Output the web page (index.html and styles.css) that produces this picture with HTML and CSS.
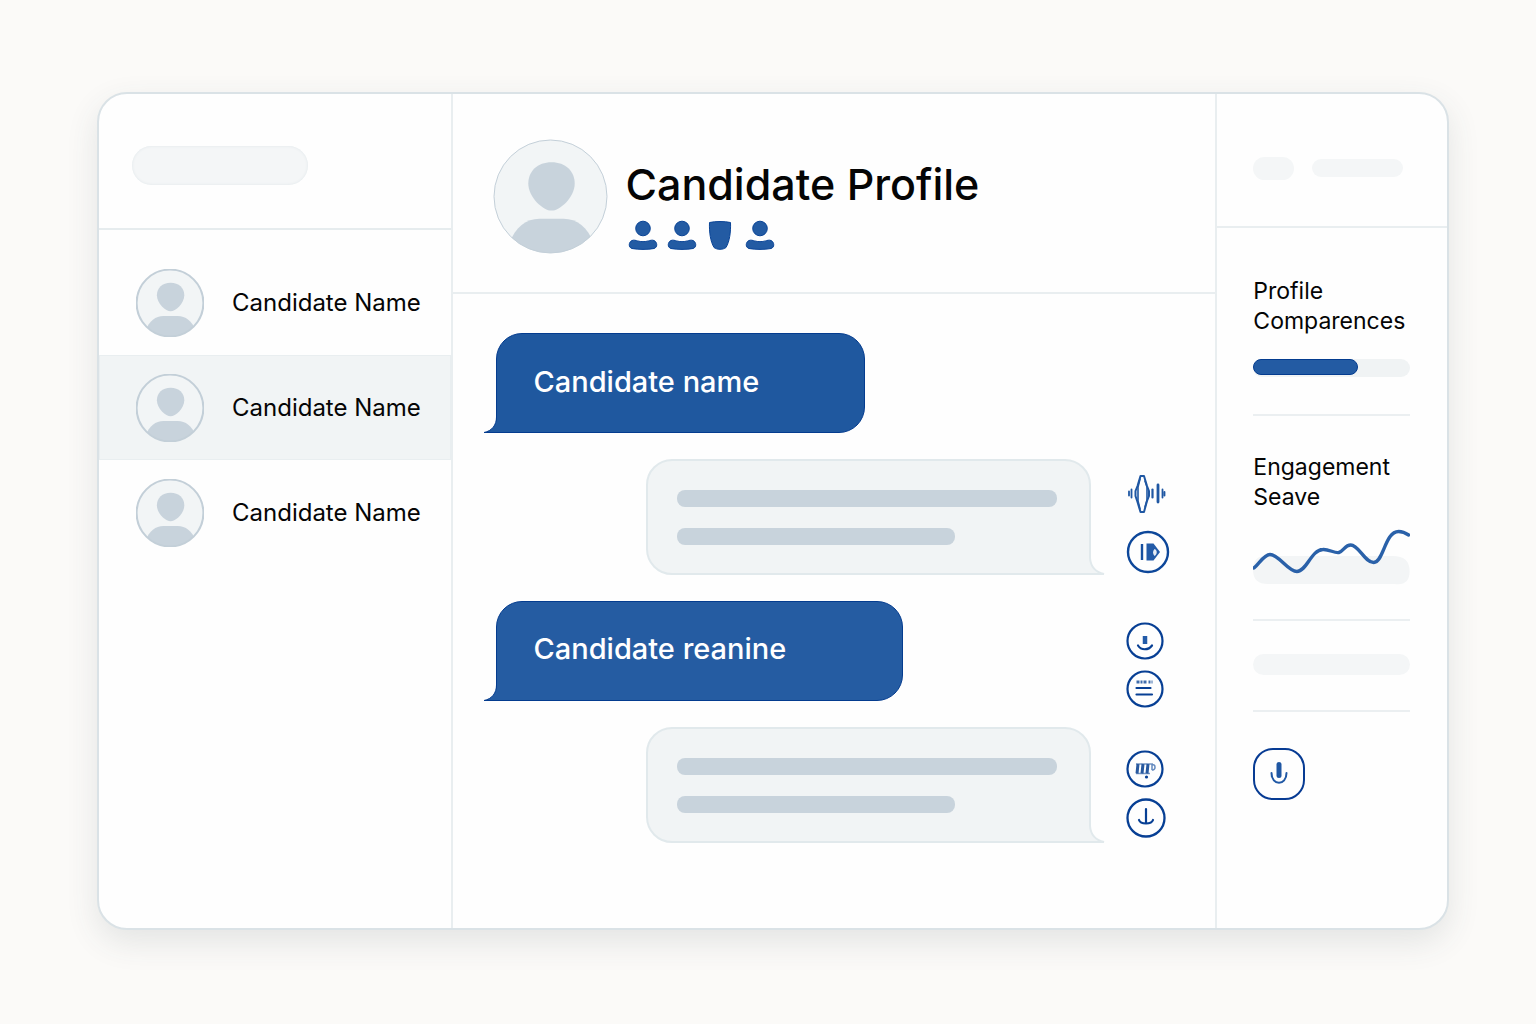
FILE: index.html
```html
<!DOCTYPE html>
<html lang="en">
<head>
<meta charset="utf-8">
<meta name="viewport" content="width=device-width, initial-scale=1">
<title>Candidate Profile</title>
<link rel="stylesheet" href="styles.css">
</head>
<body>
<svg class="defs" aria-hidden="true">
  <symbol id="avatar" viewBox="0 0 114 114">
    <clipPath id="avatar-clip"><circle cx="57" cy="57" r="56"/></clipPath>
    <circle cx="57" cy="57" r="56" fill="#f2f5f6" stroke="none"/>
    <g clip-path="url(#avatar-clip)" fill="#c8d3dc" stroke="none">
      <path d="M58 23C44 23 35 32 35 44C35 58 50 71 58 71S81 58 81 44C81 32 72 23 58 23Z"/>
      <path d="M16 104C22 87 33 79 46 79h24c13 0 24 8 30 25v12H16Z"/>
    </g>
    <circle cx="57" cy="57" r="56" fill="none" vector-effect="non-scaling-stroke"/>
  </symbol>
  <symbol id="person" viewBox="0 0 30 30">
    <g fill="#235ba3" stroke="#0a4496">
      <circle cx="15" cy="8.500" r="7.300"/>
      <path d="M4 20.500c2-.8 4 0 5.500.4 3.500 1 7.500 1 11 0 1.500-.4 3.500-1.200 5.500-.4 3.500 1.500 3.800 7 0 8-6 1.200-16 1.200-22 0-3.800-1-3.500-6.500 0-8Z"/>
    </g>
  </symbol>
</svg>

<div class="card">
  <aside class="sidebar">
    <header class="sidebar-head"><span class="ghost search-ghost"></span></header>
    <nav class="people" aria-label="Candidates">
      <a class="person" href="#one"><svg class="avatar"><use href="#avatar"/></svg>Candidate Name</a>
      <a class="person selected" href="#two" aria-current="page"><svg class="avatar"><use href="#avatar"/></svg>Candidate Name</a>
      <a class="person" href="#three"><svg class="avatar"><use href="#avatar"/></svg>Candidate Name</a>
    </nav>
  </aside>

  <main class="main">
    <header class="profile">
      <svg class="avatar large"><use href="#avatar"/></svg>
      <div class="profile-text">
        <h1>Candidate Profile</h1>
        <div class="badges">
          <svg><use href="#person"/></svg>
          <svg><use href="#person"/></svg>
          <svg viewBox="0 0 30 30"><path d="M3.500 2.500c6-1.300 15-1.300 21 0 .4 10-1 19-4.500 25-3 2.400-9 2.400-12 0-3.500-6-4.900-15-4.500-25Z" fill="#235ba3" stroke="#0a4496"/></svg>
          <svg><use href="#person"/></svg>
        </div>
      </div>
    </header>

    <section class="conversation">
      <div class="thread">
        <div class="bubble sent first">Candidate name
          <svg class="tail" viewBox="0 0 20 20"><path d="M12.500 0V4C12.500 12 8 18 0 19.500H20V0Z" fill="#1f589f"/><path d="M12.500 0V4C12.500 12 8 18 0 19.500H20" fill="none" stroke="#043c8f"/></svg>
        </div>
        <div class="bubble received"><span class="line"></span><span class="line short"></span>
          <svg class="tail" viewBox="0 0 20 20"><path d="M5 0V3Q6 16 19 19H0V0Z" fill="#f1f4f5"/><path d="M5 0V3Q6 16 19 19H0" fill="none" stroke="#e1e9ec" stroke-width="2"/></svg>
        </div>
        <div class="bubble sent second">Candidate reanine
          <svg class="tail" viewBox="0 0 20 20"><path d="M12.500 0V4C12.500 12 8 18 0 19.500H20V0Z" fill="#255ca2"/><path d="M12.500 0V4C12.500 12 8 18 0 19.500H20" fill="none" stroke="#043c8f"/></svg>
        </div>
        <div class="bubble received"><span class="line"></span><span class="line short"></span>
          <svg class="tail" viewBox="0 0 20 20"><path d="M5 0V3Q6 16 19 19H0V0Z" fill="#f1f4f5"/><path d="M5 0V3Q6 16 19 19H0" fill="none" stroke="#e1e9ec" stroke-width="2"/></svg>
        </div>
      </div>

      <div class="actions">
        <div class="action-group wide">
          <button class="action wave" aria-label="Audio waveform">
            <svg viewBox="0 0 40 40" fill="none" stroke="#1f57a3" stroke-linecap="round" stroke-linejoin="round"><path d="M3 17.500v4M5.500 15.500v8" stroke-width="1.800"/><path d="M14.500 2h3.500l3 10 2 5v5l-2 5-3 11h-3.500l-3-10-2-6v-5l2-5Z" stroke-width="2"/><path d="M14 5 12 13v14l2 8M19 7l2 6v13l-2 7" stroke-width="1.600"/><path d="M26.500 15.500v8" stroke-width="2.200"/><path d="M32 11v17" stroke-width="2.800"/><path d="M36.500 15.500v8M38.500 18v3.500" stroke-width="1.800"/></svg>
          </button>
          <button class="action big" aria-label="Play">
            <svg viewBox="0 0 44 44"><circle cx="22" cy="22" r="20" fill="none" stroke="#0d479a" stroke-width="2.400"/><path d="M16 14v16" stroke="#164f9f" stroke-width="2.400"/><path d="M20.500 13.500h7l6.500 8.500-6.500 8.500h-7Z" fill="#235ba8"/><path d="M28.500 19c3 1 3 5 0 7-2-2-2-5 0-7Z" fill="#e7edf5"/></svg>
          </button>
        </div>
        <div class="action-group">
          <button class="action" aria-label="Record">
            <svg viewBox="0 0 38 38" fill="none" stroke="#073f94" stroke-linecap="round"><circle cx="19" cy="19" r="17.500" stroke-width="2.200"/><path d="M19 14v8" stroke="#235ba8" stroke-width="4.500" stroke-linecap="butt"/><path d="M12 23.500c3 5 10.500 5 14 0" stroke-width="2.200"/></svg>
          </button>
          <button class="action" aria-label="Transcript">
            <svg viewBox="0 0 38 38" fill="none" stroke="#073f94" stroke-linecap="round"><circle cx="19" cy="19" r="17.500" stroke-width="2.200"/><path d="M10.500 18h14M10.500 24.500h15.500" stroke-width="2.200"/><path d="M10.500 12h16" stroke="#3f6cac" stroke-width="3" stroke-linecap="butt" stroke-dasharray="3 1 2 1 3 2 2 1"/></svg>
          </button>
        </div>
        <div class="action-group">
          <button class="action" aria-label="Notes">
            <svg viewBox="0 0 38 38" fill="none" stroke="#073f94"><circle cx="19" cy="19" r="17.500" stroke-width="2.200"/><path d="M10 14h17M10 23.500h14" stroke="#7898c5" stroke-width="1.400"/><path d="m12 14-1 9.500M17 14l-1 9.500M22 14l-1 9.500" stroke="#28599f" stroke-width="3"/><path d="M26 14v6M26 15c4-2 4 6 0 5" stroke="#6389be" stroke-width="1.500"/><circle cx="20.500" cy="27" r="1.600" fill="#073f94" stroke="none"/></svg>
          </button>
          <button class="action mid" aria-label="Download">
            <svg viewBox="0 0 40 40" fill="none" stroke="#073f94" stroke-linecap="round"><circle cx="20" cy="20" r="18.500" stroke-width="2.300"/><path d="M20 11v14M13 22c1 3 4 3.500 7 3.500s6-.5 7-3.500" stroke-width="2.200"/></svg>
          </button>
        </div>
      </div>
    </section>
  </main>

  <aside class="insights">
    <header class="insights-head"><span class="ghost dot-ghost"></span><span class="ghost bar-ghost"></span></header>
    <div class="insights-body">
      <section class="panel compare">
        <h2>Profile Comparences</h2>
        <div class="meter" role="img" aria-label="Profile comparison"><span></span></div>
      </section>
      <section class="panel engagement">
        <h2>Engagement Seave</h2>
        <svg class="chart" viewBox="0 0 157 56" preserveAspectRatio="none"><path d="M12 27H140Q157 27 157 42T142 55H15Q0 55 0 41T12 27Z" fill="#f3f5f6"/><path d="M1 39C6 35 11 25.500 17 25.500 26 25.500 35 42.500 44 42.500 54 42.500 58 21 70 20.500 76 20 82 24.500 86 23.500 91 22 92 16 98 16 106 16 112 33.500 121 33.500 131 33.500 132 2.500 146 2.500 150 2.500 153 4 156 6" fill="none" stroke="#2a61a9" stroke-width="3.400" stroke-linecap="round"/></svg>
      </section>
      <section class="panel note"><span class="ghost note-ghost"></span></section>
      <button class="mic" aria-label="Microphone">
        <svg viewBox="0 0 24 24" fill="none" stroke-linecap="round"><path d="M12 2.500v11" stroke="#1f57a3" stroke-width="5"/><path d="M4.500 11c0 13 15 13 15 0" stroke="#2058a5" stroke-width="2"/></svg>
      </button>
    </div>
  </aside>
</div>
</body>
</html>
```
FILE: styles.css
```css
* { box-sizing: border-box; }

body {
  margin: 0;
  min-height: 100vh;
  display: flex;
  padding: 92px 87px 94px 97px;
  background: #fbfaf8;
  color: #050505;
  font-family: Inter, "Liberation Sans", sans-serif;
}

h1, h2 { margin: 0; font-weight: 400; }
a { color: inherit; text-decoration: none; }
svg { display: block; }
.defs { position: absolute; width: 0; height: 0; }

button {
  padding: 0;
  border: 0;
  background: none;
  cursor: pointer;
}

.card {
  flex: 1;
  display: grid;
  grid-template-columns: minmax(0, 355fr) minmax(0, 763fr) minmax(0, 232fr);
  border: 2px solid #dae2e6;
  border-radius: 30px;
  background: #fefefe;
  box-shadow: 0 12px 32px rgba(60, 70, 80, 0.12);
  overflow: hidden;
}

.ghost {
  display: block;
  background: #f4f6f7;
  border-radius: 20px;
}

.avatar {
  flex: none;
  width: 68px;
  height: 68px;
  stroke: #c3cfd8;
  stroke-width: 2px;
}

/* Candidate list */
.sidebar { border-right: 2px solid #e9eef0; }
.sidebar-head {
  height: 136px;
  padding: 52px 33px 0;
  border-bottom: 2px solid #e6ecee;
}
.search-ghost {
  width: 176px;
  height: 39px;
  box-shadow: inset 0 0 3px #dfe6e9;
}
.people { padding-top: 20px; }
.person {
  display: flex;
  align-items: center;
  gap: 28px;
  height: 105px;
  padding-left: 37px;
  font-size: 24px;
  white-space: nowrap;
}
.selected {
  background: #f1f4f5;
  box-shadow: inset 0 0 0 1px #e9eef0;
}

/* Profile header */
.profile {
  display: flex;
  align-items: flex-start;
  gap: 17px;
  height: 200px;
  padding: 45px 40px 0;
  border-bottom: 2px solid #e9eef0;
}
.large { width: 115px; height: 115px; stroke-width: 1px; }
.profile-text { padding-top: 17px; }
h1 {
  font-size: 43px;
  line-height: 56px;
  font-weight: 500;
  white-space: nowrap;
}
.badges { display: flex; gap: 9px; padding: 8px 3px; }
.badges svg { width: 30px; height: 30px; }

/* Conversation */
.conversation {
  display: flex;
  gap: 35px;
  padding: 39px 45px 40px 43px;
}
.thread {
  flex: 1;
  display: flex;
  flex-direction: column;
  gap: 26px;
}
.bubble {
  position: relative;
  max-width: 100%;
}
.sent {
  height: 100px;
  padding: 0 36px;
  border: 1px solid #043c8f;
  border-radius: 26px 26px 26px 0;
  background: #1f589f;
  color: #fff;
  font-size: 29px;
  font-weight: 500;
  line-height: 96px;
  white-space: nowrap;
}
.first { width: 369px; }
.second { width: 407px; background: #255ca2; line-height: 94px; }
.received {
  align-self: flex-end;
  display: flex;
  flex-direction: column;
  gap: 21px;
  width: 445px;
  height: 116px;
  padding: 29px 32px 0 29px;
  border: 2px solid #e1e9ec;
  border-radius: 26px 26px 0 26px;
  background: #f1f4f5;
}
.line {
  height: 17px;
  border-radius: 8px;
  background: #c8d3dc;
}
.short { width: 278px; }
.tail { position: absolute; width: 20px; height: 20px; }
.sent .tail { left: -13px; bottom: -1px; }
.received .tail { right: -16px; bottom: -2px; }

.actions {
  display: flex;
  flex-direction: column;
  gap: 42px;
  padding-top: 141px;
}
.action-group {
  display: flex;
  flex-direction: column;
  gap: 10px;
  width: 44px;
}
.wide { gap: 16px; padding-bottom: 6px; }
.action { width: 38px; height: 38px; }
.mid, .wave { width: 40px; height: 40px; }
.big { width: 44px; height: 44px; }

/* Insights */
.insights { border-left: 2px solid #e9eef0; }
.insights-head {
  display: flex;
  align-items: center;
  gap: 18px;
  height: 134px;
  padding: 16px 36px 0;
  border-bottom: 2px solid #e9eef0;
}
.dot-ghost { width: 41px; height: 23px; }
.bar-ghost { width: 91px; height: 18px; }
.insights-body { padding: 0 37px 0 36px; }
.panel { border-bottom: 2px solid #ebeff1; }
h2 { font-size: 23px; line-height: 30px; }
.compare { height: 188px; padding-top: 48px; }
.engagement { height: 205px; padding-top: 36px; }
.meter {
  height: 18px;
  margin-top: 23px;
  border-radius: 9px;
  background: #f0f3f4;
}
.meter span {
  display: block;
  width: 67%;
  height: 16px;
  border: 1px solid #043c8f;
  border-radius: 8px;
  background: #235ba3;
}
.chart { width: 100%; height: 56px; margin-top: 17px; }
.note { height: 91px; padding-top: 33px; }
.note-ghost { height: 21px; }
.mic {
  display: grid;
  place-items: center;
  width: 52px;
  height: 52px;
  margin-top: 36px;
  border: 2px solid #073b93;
  border-radius: 20px;
}
.mic svg { width: 24px; height: 24px; }
```
